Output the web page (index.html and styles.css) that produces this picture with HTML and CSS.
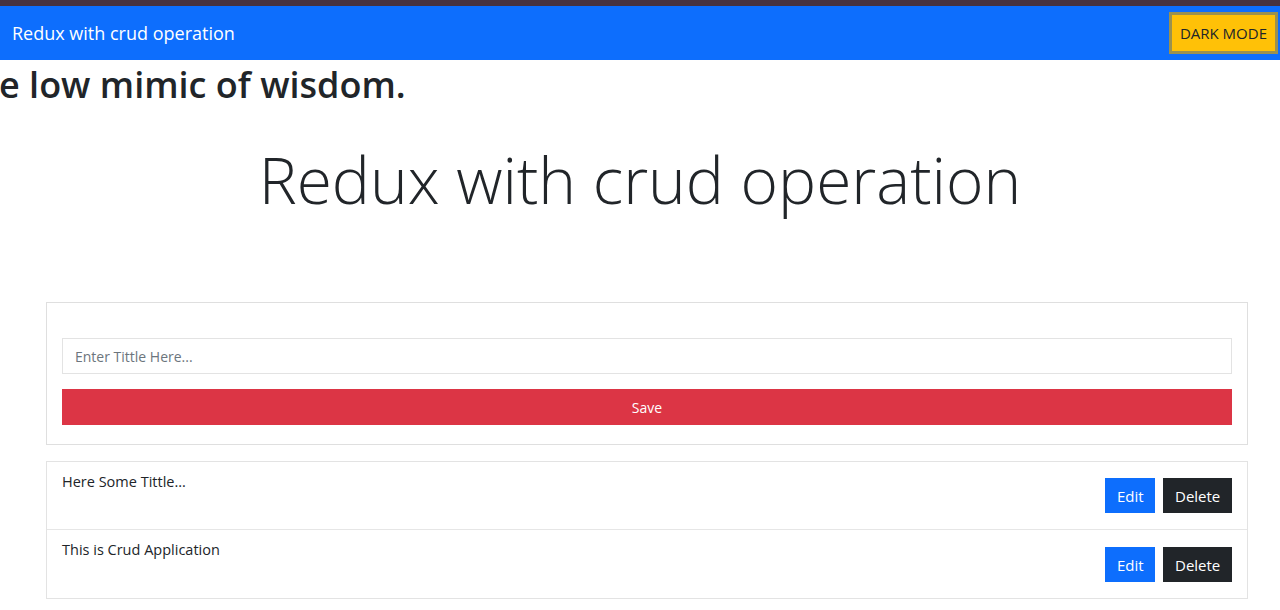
FILE: index.html
```html
<!DOCTYPE html>
<html>
<head>
<meta charset="utf-8">
<link rel="stylesheet" href="styles.css">
</head>
<body>
<div class="topstrip"></div>
<nav class="navbar">
  <span class="brand">Redux with crud operation</span>
  <button class="mode-btn">DARK MODE</button>
</nav>
<div class="ticker">e low mimic of wisdom.</div>
<h1 class="display">Redux with crud operation</h1>
<main class="container">
  <section class="card">
    <input class="field" type="text" placeholder="Enter Tittle Here...">
    <button class="save-btn">Save</button>
  </section>
  <ul class="list">
    <li class="item">
      <span class="item-text">Here Some Tittle...</span>
      <div class="actions">
        <button class="btn btn-edit">Edit</button>
        <button class="btn btn-delete">Delete</button>
      </div>
    </li>
    <li class="item">
      <span class="item-text">This is Crud Application</span>
      <div class="actions">
        <button class="btn btn-edit">Edit</button>
        <button class="btn btn-delete">Delete</button>
      </div>
    </li>
  </ul>
</main>
</body>
</html>
```
FILE: styles.css
```css
* { box-sizing: border-box; }
html, body { margin: 0; padding: 0; }
body {
  font-family: "Open Sans", "Noto Sans", sans-serif;
  color: #212529;
  background: #fff;
  overflow: hidden;
}
.topstrip { height: 6px; background: #47323f; }
.navbar {
  height: 54px;
  background: #0d6efd;
  display: flex;
  align-items: center;
  justify-content: space-between;
  padding: 0 2px 0 12px;
}
.brand { color: #fff; font-size: 18px; }
.mode-btn {
  background: #ffc107;
  border: 3px solid #9a9150;
  color: #212529;
  font-family: inherit;
  font-size: 15px;
  height: 42px;
  padding: 0 8px;
}
.ticker {
  font-weight: 600;
  font-size: 36px;
  line-height: 50px;
  white-space: nowrap;
  margin-left: -1px;
}
.display {
  font-weight: 300;
  font-size: 64px;
  text-align: center;
  margin: 20px 0 0;
  line-height: 100px;
}
.container { padding: 0 32px 0 46px; margin-top: 72px; }
.card {
  border: 1px solid #dfdfdf;
  padding: 35px 15px 19px;
  display: flex;
  flex-direction: column;
  gap: 15px;
}
.field {
  height: 36px;
  border: 1px solid #e3e3e3;
  padding: 0 12px;
  font-family: inherit;
  font-size: 14px;
  outline: none;
}
.field::placeholder { color: #6c757d; }
.save-btn {
  height: 36px;
  background: #dc3545;
  border: none;
  color: #fff;
  font-family: inherit;
  font-size: 14px;
}
.list {
  list-style: none;
  margin: 16px 0 0;
  padding: 0;
  border: 1px solid #e3e3e3;
}
.item {
  height: 67px;
  display: flex;
  justify-content: space-between;
  padding: 10px 15px 16px;
}
.item + .item { border-top: 1px solid #e6e6e6; height: 69px; }
.item-text { font-size: 14.5px; line-height: 20px; }
.actions { display: flex; align-items: flex-end; gap: 8px; }
.btn {
  height: 35px;
  border: none;
  font-family: inherit;
  font-size: 15px;
  color: #fff;
  padding: 0 12px;
}
.btn-edit { background: #0d6efd; width: 50px; }
.btn-delete { background: #212529; width: 69px; }
```
